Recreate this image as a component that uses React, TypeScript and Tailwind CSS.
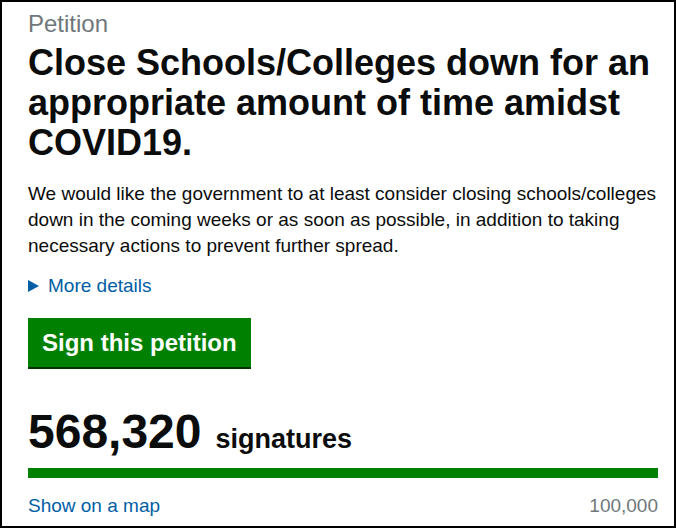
export default function App() {
  return (
    <div
      className="w-[676px] h-[528px] border-2 border-black bg-white overflow-hidden"
      style={{ fontFamily: '"Liberation Sans", Arial, sans-serif' }}
    >
      <div className="pl-[26px] pr-[16px] pt-[8px]">
        <p className="text-[24px] leading-[28px] text-[#6f777b]">Petition</p>
        <h1 className="mt-[5px] text-[36px] leading-[40px] font-bold text-[#0b0c0c]">
          Close Schools/Colleges down for an appropriate amount of time amidst COVID19.
        </h1>
        <p className="mt-[18px] text-[19px] leading-[26px] text-[#0b0c0c]">
          We would like the government to at least consider closing schools/colleges down in the coming weeks or as soon as possible, in addition to taking necessary actions to prevent further spread.
        </p>
        <div className="mt-[15px] flex items-center gap-[9px] text-[19px] leading-[24px] text-[#005ea5]">
          <svg width="11" height="12" viewBox="0 0 11 12" className="shrink-0">
            <path d="M0 0 L11 6 L0 12 Z" fill="#005ea5" />
          </svg>
          <span>More details</span>
        </div>
        <button className="mt-[20px] h-[51px] px-[14px] bg-[#008000] text-white text-[24px] font-bold border-b-2 border-[#003400]">
          Sign this petition
        </button>
        <div className="mt-[34px] flex items-baseline gap-[14px] text-[#0b0c0c]">
          <span className="text-[48px] leading-[58px] font-bold">568,320</span>
          <span className="text-[27px] font-bold">signatures</span>
        </div>
        <div className="mt-[7px] h-[10px] w-[630px] bg-[#008000]" />
        <div className="mt-[16px] w-[630px] flex justify-between text-[19px] leading-[24px]">
          <span className="text-[#005ea5]">Show on a map</span>
          <span className="text-[#6f777b]">100,000</span>
        </div>
      </div>
    </div>
  );
}
